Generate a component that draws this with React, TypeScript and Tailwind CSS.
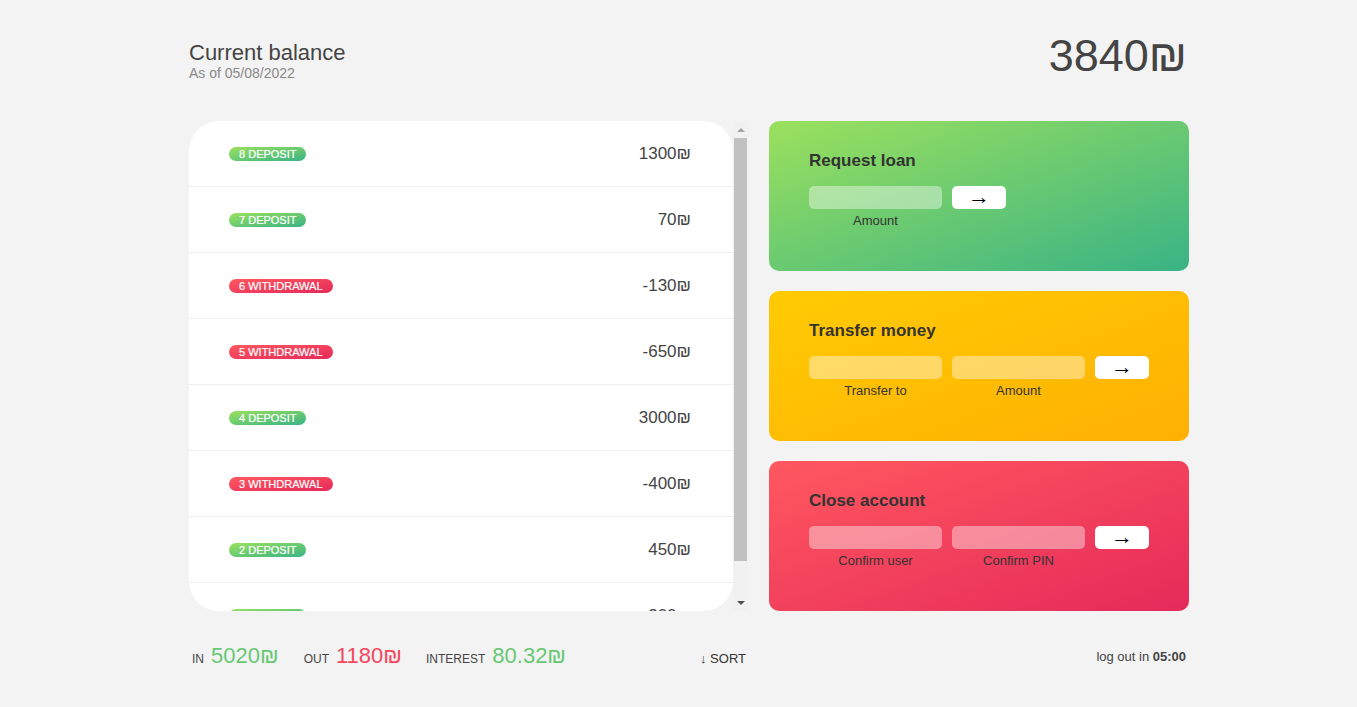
const movements = [1300, 70, -130, -650, 3000, -400, 450, 200];

function Badge({ n, amount }: { n: number; amount: number }) {
  const deposit = amount > 0;
  return (
    <span
      className={`${
        deposit
          ? 'bg-[linear-gradient(to_top_left,#39b385,#9be15d)]'
          : 'bg-[linear-gradient(to_top_left,#e52a5a,#ff585f)]'
      } rounded-full px-[10px] h-[14px] leading-[14px] text-[11px] text-white uppercase [-webkit-text-stroke:0.2px_white]`}
    >
      {n} {deposit ? 'deposit' : 'withdrawal'}
    </span>
  );
}

function Row({ n, amount }: { n: number; amount: number }) {
  return (
    <div className="flex items-center justify-between h-[66px] shrink-0 pl-10 pr-[42px] border-b border-[#eee]">
      <Badge n={n} amount={amount} />
      <div className="text-[17px] text-[#444]">{amount}₪</div>
    </div>
  );
}

function Scrollbar() {
  return (
    <div className="w-[15px] bg-[#f1f1f1] flex flex-col items-center">
      <div className="h-[17px] flex items-center justify-center">
        <div className="w-0 h-0 border-l-[4px] border-r-[4px] border-b-[4px] border-l-transparent border-r-transparent border-b-[#a3a3a3]" />
      </div>
      <div className="w-[13px] h-[423px] bg-[#c1c1c1]" />
      <div className="flex-1 flex items-end justify-center pb-[6px]">
        <div className="w-0 h-0 border-l-[4px] border-r-[4px] border-t-[4px] border-l-transparent border-r-transparent border-t-[#505050]" />
      </div>
    </div>
  );
}

function Operation({
  title,
  gradient,
  fields,
}: {
  title: string;
  gradient: string;
  fields: string[];
}) {
  return (
    <div className={`${gradient} h-[150px] rounded-[10px] pt-[27px] px-10`}>
      <h2 className="text-[17px] font-bold text-[#333] mb-[12px]">{title}</h2>
      <div className="flex gap-[10px]">
        {fields.map((f) => (
          <div key={f} className="flex flex-col items-center">
            <div className="w-[133px] h-[23px] rounded-[5px] bg-white/40" />
            <div className="text-[13px] text-[#333] mt-[2px]">{f}</div>
          </div>
        ))}
        <div className="w-[54px] h-[23px] rounded-[5px] bg-white flex items-center justify-center text-[22px] leading-none text-black">
          →
        </div>
      </div>
    </div>
  );
}

export default function App() {
  return (
    <div className="min-h-[707px] bg-[#f3f3f3] font-['Liberation_Sans',Arial,sans-serif] text-[#444]">
      <div className="w-[1000px] ml-[189px] pt-[30px]">
        <div className="flex items-center justify-between h-[55px]">
          <div className="pt-[7px]">
            <p className="text-[22px] leading-[24px] text-[#444]">Current balance</p>
            <p className="text-[14px] leading-[16px] text-[#888]">As of 05/08/2022</p>
          </div>
          <p className="text-[45px] leading-none text-[#444] pr-[2px] -mt-[5px]">3840₪</p>
        </div>

        <div className="flex gap-[21px] mt-[36px]">
          <div className="flex h-[490px] w-[559px]">
            <div className="flex-1 bg-white rounded-[30px] overflow-hidden flex flex-col">
              {movements.map((m, i) => (
                <Row key={i} n={movements.length - i} amount={m} />
              ))}
            </div>
            <Scrollbar />
          </div>

          <div className="flex-1 flex flex-col gap-5">
            <Operation
              title="Request loan"
              gradient="bg-[linear-gradient(to_top_left,#39b385,#9be15d)]"
              fields={['Amount']}
            />
            <Operation
              title="Transfer money"
              gradient="bg-[linear-gradient(to_top_left,#ffb003,#ffcb03)]"
              fields={['Transfer to', 'Amount']}
            />
            <Operation
              title="Close account"
              gradient="bg-[linear-gradient(to_top_left,#e52a5a,#ff585f)]"
              fields={['Confirm user', 'Confirm PIN']}
            />
          </div>
        </div>

        <div className="flex items-center h-[88px] pl-[3px]">
          <div className="flex items-baseline w-[557px]">
            <span className="text-[12px] uppercase mr-[7px]">In</span>
            <span className="text-[22px] text-[#66c873] mr-[25px]">5020₪</span>
            <span className="text-[12px] uppercase mr-[7px]">Out</span>
            <span className="text-[22px] text-[#f5465d] mr-[24px]">1180₪</span>
            <span className="text-[12px] uppercase mr-[7px]">Interest</span>
            <span className="text-[22px] text-[#66c873]">80.32₪</span>
            <span className="ml-auto text-[13px] text-[#333] pr-[3px]">↓ SORT</span>
          </div>
          <div className="ml-auto text-[13px] text-[#444] pr-[3px] pt-[3px]">
            log out in <span className="font-bold">05:00</span>
          </div>
        </div>
      </div>
    </div>
  );
}
